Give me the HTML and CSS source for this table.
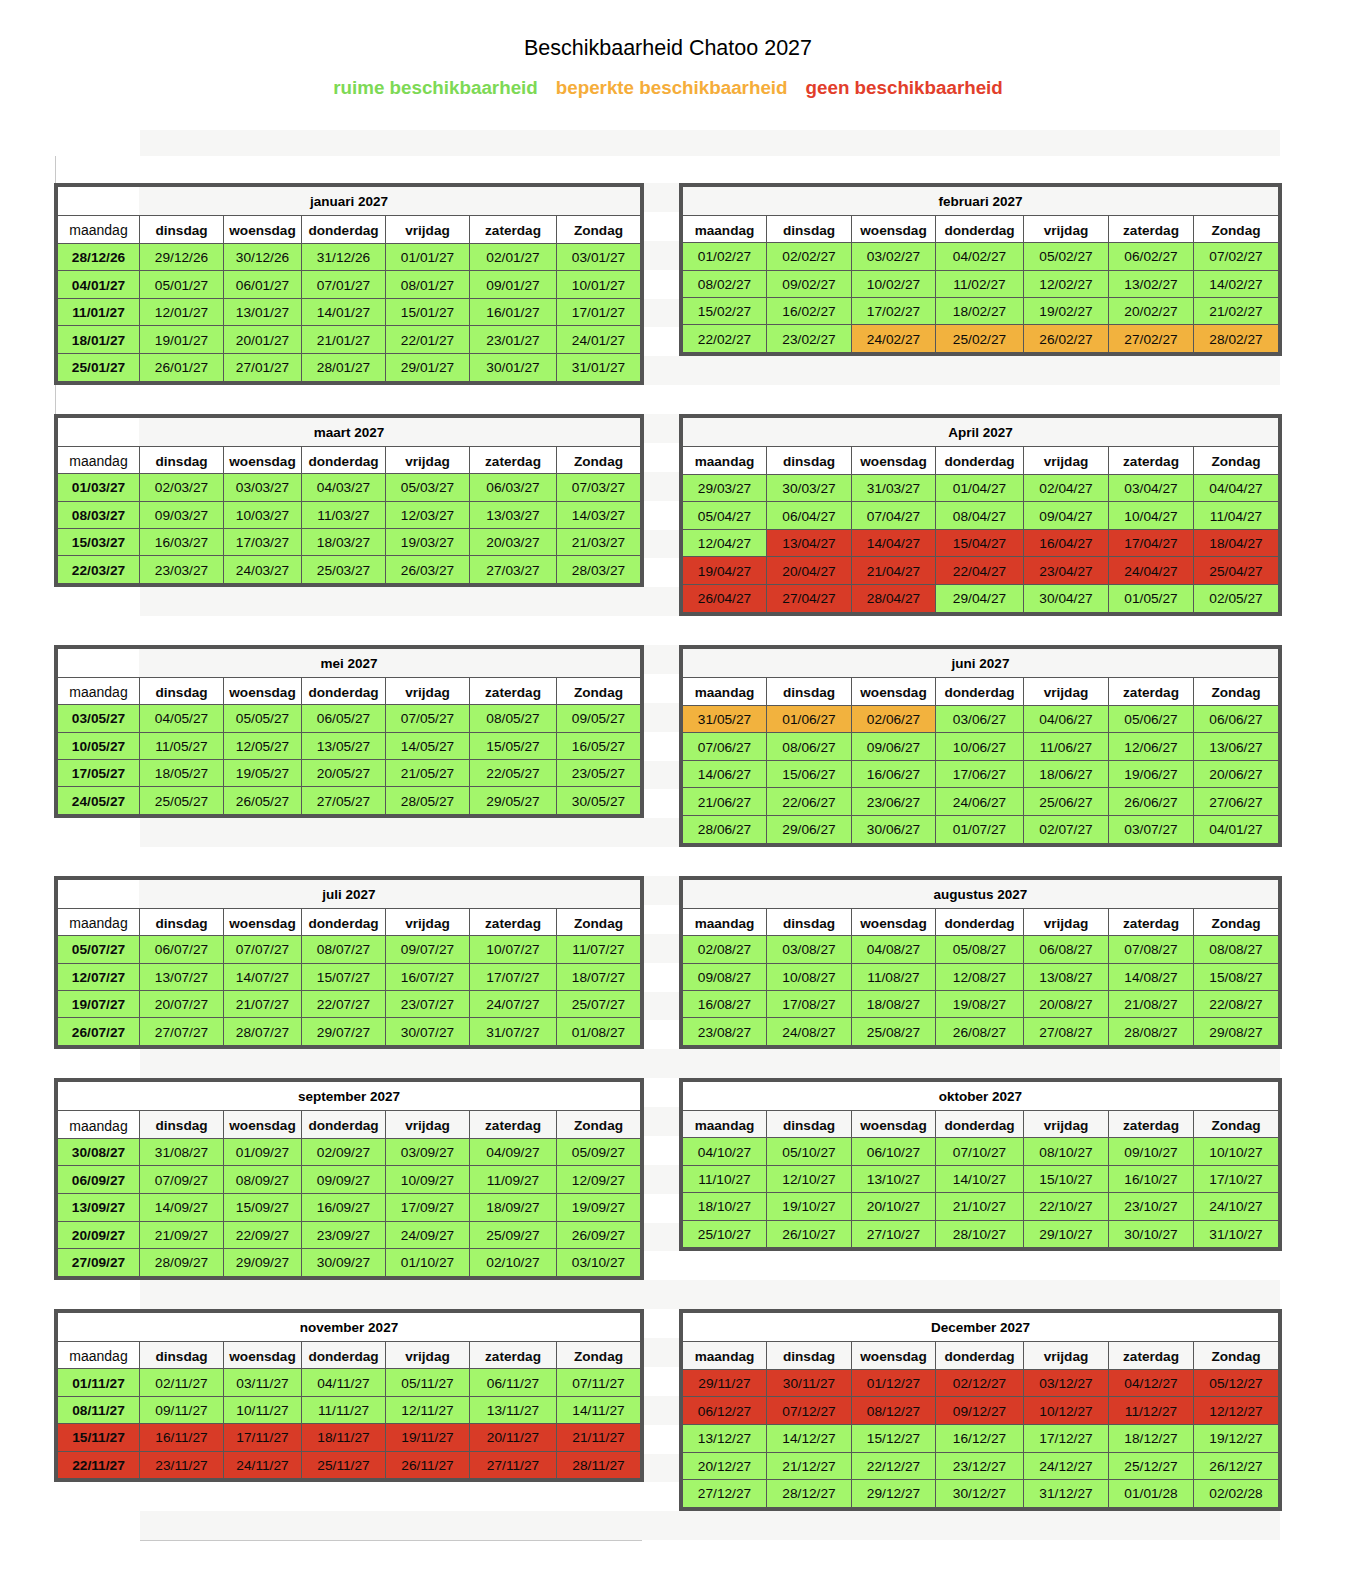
FILE: index.html
```html
<!DOCTYPE html>
<html lang="nl">
<head>
<meta charset="utf-8">
<title>Beschikbaarheid Chatoo 2027</title>
<link rel="stylesheet" href="styles.css">
</head>
<body>
<div class="page">
  <h1 class="title">Beschikbaarheid Chatoo 2027</h1>
  <div class="legend">
    <span class="lg-g">ruime beschikbaarheid</span>
    <span class="lg-o">beperkte beschikbaarheid</span>
    <span class="lg-r">geen beschikbaarheid</span>
  </div>
  <div class="band"></div>
  <div class="gap-row"></div>

  <div class="sheet">
    <!-- januari / februari -->
    <div class="blk first">
      <section class="cal l w5">
        <div class="ttl">januari 2027</div>
        <div class="row hd"><span>maandag</span><span>dinsdag</span><span>woensdag</span><span>donderdag</span><span>vrijdag</span><span>zaterdag</span><span>Zondag</span></div>
        <div class="row g"><span>28/12/26</span><span>29/12/26</span><span>30/12/26</span><span>31/12/26</span><span>01/01/27</span><span>02/01/27</span><span>03/01/27</span></div>
        <div class="row g"><span>04/01/27</span><span>05/01/27</span><span>06/01/27</span><span>07/01/27</span><span>08/01/27</span><span>09/01/27</span><span>10/01/27</span></div>
        <div class="row g"><span>11/01/27</span><span>12/01/27</span><span>13/01/27</span><span>14/01/27</span><span>15/01/27</span><span>16/01/27</span><span>17/01/27</span></div>
        <div class="row g"><span>18/01/27</span><span>19/01/27</span><span>20/01/27</span><span>21/01/27</span><span>22/01/27</span><span>23/01/27</span><span>24/01/27</span></div>
        <div class="row g"><span>25/01/27</span><span>26/01/27</span><span>27/01/27</span><span>28/01/27</span><span>29/01/27</span><span>30/01/27</span><span>31/01/27</span></div>
      </section>
      <section class="cal r w4">
        <div class="ttl">februari 2027</div>
        <div class="row hd"><span>maandag</span><span>dinsdag</span><span>woensdag</span><span>donderdag</span><span>vrijdag</span><span>zaterdag</span><span>Zondag</span></div>
        <div class="row g"><span>01/02/27</span><span>02/02/27</span><span>03/02/27</span><span>04/02/27</span><span>05/02/27</span><span>06/02/27</span><span>07/02/27</span></div>
        <div class="row g"><span>08/02/27</span><span>09/02/27</span><span>10/02/27</span><span>11/02/27</span><span>12/02/27</span><span>13/02/27</span><span>14/02/27</span></div>
        <div class="row g"><span>15/02/27</span><span>16/02/27</span><span>17/02/27</span><span>18/02/27</span><span>19/02/27</span><span>20/02/27</span><span>21/02/27</span></div>
        <div class="row g"><span>22/02/27</span><span>23/02/27</span><span class="o">24/02/27</span><span class="o">25/02/27</span><span class="o">26/02/27</span><span class="o">27/02/27</span><span class="o">28/02/27</span></div>
      </section>
    </div>

    <!-- maart / april -->
    <div class="blk">
      <section class="cal l w4">
        <div class="ttl">maart 2027</div>
        <div class="row hd"><span>maandag</span><span>dinsdag</span><span>woensdag</span><span>donderdag</span><span>vrijdag</span><span>zaterdag</span><span>Zondag</span></div>
        <div class="row g"><span>01/03/27</span><span>02/03/27</span><span>03/03/27</span><span>04/03/27</span><span>05/03/27</span><span>06/03/27</span><span>07/03/27</span></div>
        <div class="row g"><span>08/03/27</span><span>09/03/27</span><span>10/03/27</span><span>11/03/27</span><span>12/03/27</span><span>13/03/27</span><span>14/03/27</span></div>
        <div class="row g"><span>15/03/27</span><span>16/03/27</span><span>17/03/27</span><span>18/03/27</span><span>19/03/27</span><span>20/03/27</span><span>21/03/27</span></div>
        <div class="row g"><span>22/03/27</span><span>23/03/27</span><span>24/03/27</span><span>25/03/27</span><span>26/03/27</span><span>27/03/27</span><span>28/03/27</span></div>
      </section>
      <section class="cal r w5">
        <div class="ttl">April 2027</div>
        <div class="row hd"><span>maandag</span><span>dinsdag</span><span>woensdag</span><span>donderdag</span><span>vrijdag</span><span>zaterdag</span><span>Zondag</span></div>
        <div class="row g"><span>29/03/27</span><span>30/03/27</span><span>31/03/27</span><span>01/04/27</span><span>02/04/27</span><span>03/04/27</span><span>04/04/27</span></div>
        <div class="row g"><span>05/04/27</span><span>06/04/27</span><span>07/04/27</span><span>08/04/27</span><span>09/04/27</span><span>10/04/27</span><span>11/04/27</span></div>
        <div class="row r"><span class="gr">12/04/27</span><span>13/04/27</span><span>14/04/27</span><span>15/04/27</span><span>16/04/27</span><span>17/04/27</span><span>18/04/27</span></div>
        <div class="row r"><span>19/04/27</span><span>20/04/27</span><span>21/04/27</span><span>22/04/27</span><span>23/04/27</span><span>24/04/27</span><span>25/04/27</span></div>
        <div class="row g"><span class="rd">26/04/27</span><span class="rd">27/04/27</span><span class="rd">28/04/27</span><span>29/04/27</span><span>30/04/27</span><span>01/05/27</span><span>02/05/27</span></div>
      </section>
    </div>

    <!-- mei / juni -->
    <div class="blk">
      <section class="cal l w4">
        <div class="ttl">mei 2027</div>
        <div class="row hd"><span>maandag</span><span>dinsdag</span><span>woensdag</span><span>donderdag</span><span>vrijdag</span><span>zaterdag</span><span>Zondag</span></div>
        <div class="row g"><span>03/05/27</span><span>04/05/27</span><span>05/05/27</span><span>06/05/27</span><span>07/05/27</span><span>08/05/27</span><span>09/05/27</span></div>
        <div class="row g"><span>10/05/27</span><span>11/05/27</span><span>12/05/27</span><span>13/05/27</span><span>14/05/27</span><span>15/05/27</span><span>16/05/27</span></div>
        <div class="row g"><span>17/05/27</span><span>18/05/27</span><span>19/05/27</span><span>20/05/27</span><span>21/05/27</span><span>22/05/27</span><span>23/05/27</span></div>
        <div class="row g"><span>24/05/27</span><span>25/05/27</span><span>26/05/27</span><span>27/05/27</span><span>28/05/27</span><span>29/05/27</span><span>30/05/27</span></div>
      </section>
      <section class="cal r w5">
        <div class="ttl">juni 2027</div>
        <div class="row hd"><span>maandag</span><span>dinsdag</span><span>woensdag</span><span>donderdag</span><span>vrijdag</span><span>zaterdag</span><span>Zondag</span></div>
        <div class="row g"><span class="o">31/05/27</span><span class="o">01/06/27</span><span class="o">02/06/27</span><span>03/06/27</span><span>04/06/27</span><span>05/06/27</span><span>06/06/27</span></div>
        <div class="row g"><span>07/06/27</span><span>08/06/27</span><span>09/06/27</span><span>10/06/27</span><span>11/06/27</span><span>12/06/27</span><span>13/06/27</span></div>
        <div class="row g"><span>14/06/27</span><span>15/06/27</span><span>16/06/27</span><span>17/06/27</span><span>18/06/27</span><span>19/06/27</span><span>20/06/27</span></div>
        <div class="row g"><span>21/06/27</span><span>22/06/27</span><span>23/06/27</span><span>24/06/27</span><span>25/06/27</span><span>26/06/27</span><span>27/06/27</span></div>
        <div class="row g"><span>28/06/27</span><span>29/06/27</span><span>30/06/27</span><span>01/07/27</span><span>02/07/27</span><span>03/07/27</span><span>04/01/27</span></div>
      </section>
    </div>

    <!-- juli / augustus -->
    <div class="blk short">
      <section class="cal l w4">
        <div class="ttl">juli 2027</div>
        <div class="row hd"><span>maandag</span><span>dinsdag</span><span>woensdag</span><span>donderdag</span><span>vrijdag</span><span>zaterdag</span><span>Zondag</span></div>
        <div class="row g"><span>05/07/27</span><span>06/07/27</span><span>07/07/27</span><span>08/07/27</span><span>09/07/27</span><span>10/07/27</span><span>11/07/27</span></div>
        <div class="row g"><span>12/07/27</span><span>13/07/27</span><span>14/07/27</span><span>15/07/27</span><span>16/07/27</span><span>17/07/27</span><span>18/07/27</span></div>
        <div class="row g"><span>19/07/27</span><span>20/07/27</span><span>21/07/27</span><span>22/07/27</span><span>23/07/27</span><span>24/07/27</span><span>25/07/27</span></div>
        <div class="row g"><span>26/07/27</span><span>27/07/27</span><span>28/07/27</span><span>29/07/27</span><span>30/07/27</span><span>31/07/27</span><span>01/08/27</span></div>
      </section>
      <section class="cal r w4">
        <div class="ttl">augustus 2027</div>
        <div class="row hd"><span>maandag</span><span>dinsdag</span><span>woensdag</span><span>donderdag</span><span>vrijdag</span><span>zaterdag</span><span>Zondag</span></div>
        <div class="row g"><span>02/08/27</span><span>03/08/27</span><span>04/08/27</span><span>05/08/27</span><span>06/08/27</span><span>07/08/27</span><span>08/08/27</span></div>
        <div class="row g"><span>09/08/27</span><span>10/08/27</span><span>11/08/27</span><span>12/08/27</span><span>13/08/27</span><span>14/08/27</span><span>15/08/27</span></div>
        <div class="row g"><span>16/08/27</span><span>17/08/27</span><span>18/08/27</span><span>19/08/27</span><span>20/08/27</span><span>21/08/27</span><span>22/08/27</span></div>
        <div class="row g"><span>23/08/27</span><span>24/08/27</span><span>25/08/27</span><span>26/08/27</span><span>27/08/27</span><span>28/08/27</span><span>29/08/27</span></div>
      </section>
    </div>

    <!-- september / oktober -->
    <div class="blk alt">
      <section class="cal l w5">
        <div class="ttl">september 2027</div>
        <div class="row hd"><span>maandag</span><span>dinsdag</span><span>woensdag</span><span>donderdag</span><span>vrijdag</span><span>zaterdag</span><span>Zondag</span></div>
        <div class="row g"><span>30/08/27</span><span>31/08/27</span><span>01/09/27</span><span>02/09/27</span><span>03/09/27</span><span>04/09/27</span><span>05/09/27</span></div>
        <div class="row g"><span>06/09/27</span><span>07/09/27</span><span>08/09/27</span><span>09/09/27</span><span>10/09/27</span><span>11/09/27</span><span>12/09/27</span></div>
        <div class="row g"><span>13/09/27</span><span>14/09/27</span><span>15/09/27</span><span>16/09/27</span><span>17/09/27</span><span>18/09/27</span><span>19/09/27</span></div>
        <div class="row g"><span>20/09/27</span><span>21/09/27</span><span>22/09/27</span><span>23/09/27</span><span>24/09/27</span><span>25/09/27</span><span>26/09/27</span></div>
        <div class="row g"><span>27/09/27</span><span>28/09/27</span><span>29/09/27</span><span>30/09/27</span><span>01/10/27</span><span>02/10/27</span><span>03/10/27</span></div>
      </section>
      <section class="cal r w4">
        <div class="ttl">oktober 2027</div>
        <div class="row hd"><span>maandag</span><span>dinsdag</span><span>woensdag</span><span>donderdag</span><span>vrijdag</span><span>zaterdag</span><span>Zondag</span></div>
        <div class="row g"><span>04/10/27</span><span>05/10/27</span><span>06/10/27</span><span>07/10/27</span><span>08/10/27</span><span>09/10/27</span><span>10/10/27</span></div>
        <div class="row g"><span>11/10/27</span><span>12/10/27</span><span>13/10/27</span><span>14/10/27</span><span>15/10/27</span><span>16/10/27</span><span>17/10/27</span></div>
        <div class="row g"><span>18/10/27</span><span>19/10/27</span><span>20/10/27</span><span>21/10/27</span><span>22/10/27</span><span>23/10/27</span><span>24/10/27</span></div>
        <div class="row g"><span>25/10/27</span><span>26/10/27</span><span>27/10/27</span><span>28/10/27</span><span>29/10/27</span><span>30/10/27</span><span>31/10/27</span></div>
      </section>
    </div>

    <!-- november / december -->
    <div class="blk alt">
      <section class="cal l w4">
        <div class="ttl">november 2027</div>
        <div class="row hd"><span>maandag</span><span>dinsdag</span><span>woensdag</span><span>donderdag</span><span>vrijdag</span><span>zaterdag</span><span>Zondag</span></div>
        <div class="row g"><span>01/11/27</span><span>02/11/27</span><span>03/11/27</span><span>04/11/27</span><span>05/11/27</span><span>06/11/27</span><span>07/11/27</span></div>
        <div class="row g"><span>08/11/27</span><span>09/11/27</span><span>10/11/27</span><span>11/11/27</span><span>12/11/27</span><span>13/11/27</span><span>14/11/27</span></div>
        <div class="row r"><span>15/11/27</span><span>16/11/27</span><span>17/11/27</span><span>18/11/27</span><span>19/11/27</span><span>20/11/27</span><span>21/11/27</span></div>
        <div class="row r"><span>22/11/27</span><span>23/11/27</span><span>24/11/27</span><span>25/11/27</span><span>26/11/27</span><span>27/11/27</span><span>28/11/27</span></div>
      </section>
      <section class="cal r w5">
        <div class="ttl">December 2027</div>
        <div class="row hd"><span>maandag</span><span>dinsdag</span><span>woensdag</span><span>donderdag</span><span>vrijdag</span><span>zaterdag</span><span>Zondag</span></div>
        <div class="row r"><span>29/11/27</span><span>30/11/27</span><span>01/12/27</span><span>02/12/27</span><span>03/12/27</span><span>04/12/27</span><span>05/12/27</span></div>
        <div class="row r"><span>06/12/27</span><span>07/12/27</span><span>08/12/27</span><span>09/12/27</span><span>10/12/27</span><span>11/12/27</span><span>12/12/27</span></div>
        <div class="row g"><span>13/12/27</span><span>14/12/27</span><span>15/12/27</span><span>16/12/27</span><span>17/12/27</span><span>18/12/27</span><span>19/12/27</span></div>
        <div class="row g"><span>20/12/27</span><span>21/12/27</span><span>22/12/27</span><span>23/12/27</span><span>24/12/27</span><span>25/12/27</span><span>26/12/27</span></div>
        <div class="row g"><span>27/12/27</span><span>28/12/27</span><span>29/12/27</span><span>30/12/27</span><span>31/12/27</span><span>01/01/28</span><span>02/02/28</span></div>
      </section>
    </div>
  </div>
  <div class="endline"></div>
</div>
</body>
</html>
```
FILE: styles.css
```css
html, body {
  margin: 0;
  background: #fff;
}
body {
  font-family: "Liberation Sans", Arial, Helvetica, sans-serif;
  color: #000;
}
.page {
  width: 1228px;
  margin-left: 54px;
}
.title {
  margin: 35px 0 0;
  font-size: 21.5px;
  line-height: 26px;
  font-weight: 400;
  text-align: center;
}
.legend {
  display: flex;
  justify-content: center;
  gap: 18px;
  margin-top: 15.5px;
  font-size: 18.8px;
  line-height: 22px;
  font-weight: 700;
}
.lg-g { color: #7dd955; }
.lg-o { color: #f5ad3a; }
.lg-r { color: #e23e2b; }

.band {
  height: 26px;
  width: 1140px;
  margin: 31px 0 0 86px;
  background: #f6f6f5;
}
.gap-row {
  height: 27px;
  margin-left: 1px;
  border-left: 1px solid #c8c8c8;
}

.sheet {
  background-image: repeating-linear-gradient(to bottom, #f6f6f5 0, #f6f6f5 28.875px, #fff 28.875px, #fff 57.75px);
  background-size: 1140px 100%;
  background-position: 86px 0;
  background-repeat: no-repeat;
}
.blk {
  display: flex;
  align-items: flex-start;
  gap: 35px;
  height: 231px;
}
.blk.short { height: 202.125px; }
.blk.first {
  background: linear-gradient(#c8c8c8, #c8c8c8) 1px 0 / 1px 100% no-repeat;
}

.cal {
  box-sizing: border-box;
  border: 4px solid #545454;
  background: #575757;
  display: flex;
  flex-direction: column;
  gap: 1px;
  flex: none;
}
.cal.l { width: 590px; }
.cal.r { width: 603px; }
.cal.w5 { height: 202.125px; }
.cal.w4 { height: 173.25px; }

.ttl {
  flex: 1;
  display: flex;
  align-items: center;
  justify-content: center;
  padding-top: 2px;
  font-weight: 700;
  font-size: 13.5px;
}
.cal.l .ttl { background: linear-gradient(to right, #fff 81px, #f6f6f5 81px); }
.cal.r .ttl { background: #f6f6f5; }
.alt .cal.l .ttl,
.alt .cal.r .ttl { background: #fff; }

.row {
  flex: 1;
  display: grid;
  gap: 1px;
}
.cal.l .row { grid-template-columns: 81px 83px 77px 83px 83px 86px 83px; }
.cal.r .row { grid-template-columns: 83px 84px 83px 87px 84px 84px 84px; }

.row > span {
  display: flex;
  align-items: center;
  justify-content: center;
  padding-top: 1px;
  font-size: 13.7px;
  color: #0a0a0a;
}
.hd > span {
  background: #fff;
  padding-top: 2px;
  font-weight: 700;
  font-size: 13.6px;
}
.cal.l .hd > span:first-child {
  font-weight: 400;
  font-size: 14px;
}
.alt .cal.r .hd > span,
.alt .cal.l .hd > span + span { background: #f6f6f5; }

.cal.l .row.g > span:first-child,
.cal.l .row.r > span:first-child { font-weight: 700; }

.g > span { background: #a3f66b; }
.r > span { background: #d83b27; }
.row > span.o { background: #f2b23e; }
.row > span.rd { background: #d83b27; }
.row > span.gr { background: #a3f66b; }

.endline {
  width: 502px;
  margin-left: 86px;
  border-top: 1px solid #c8c8c8;
}
```
